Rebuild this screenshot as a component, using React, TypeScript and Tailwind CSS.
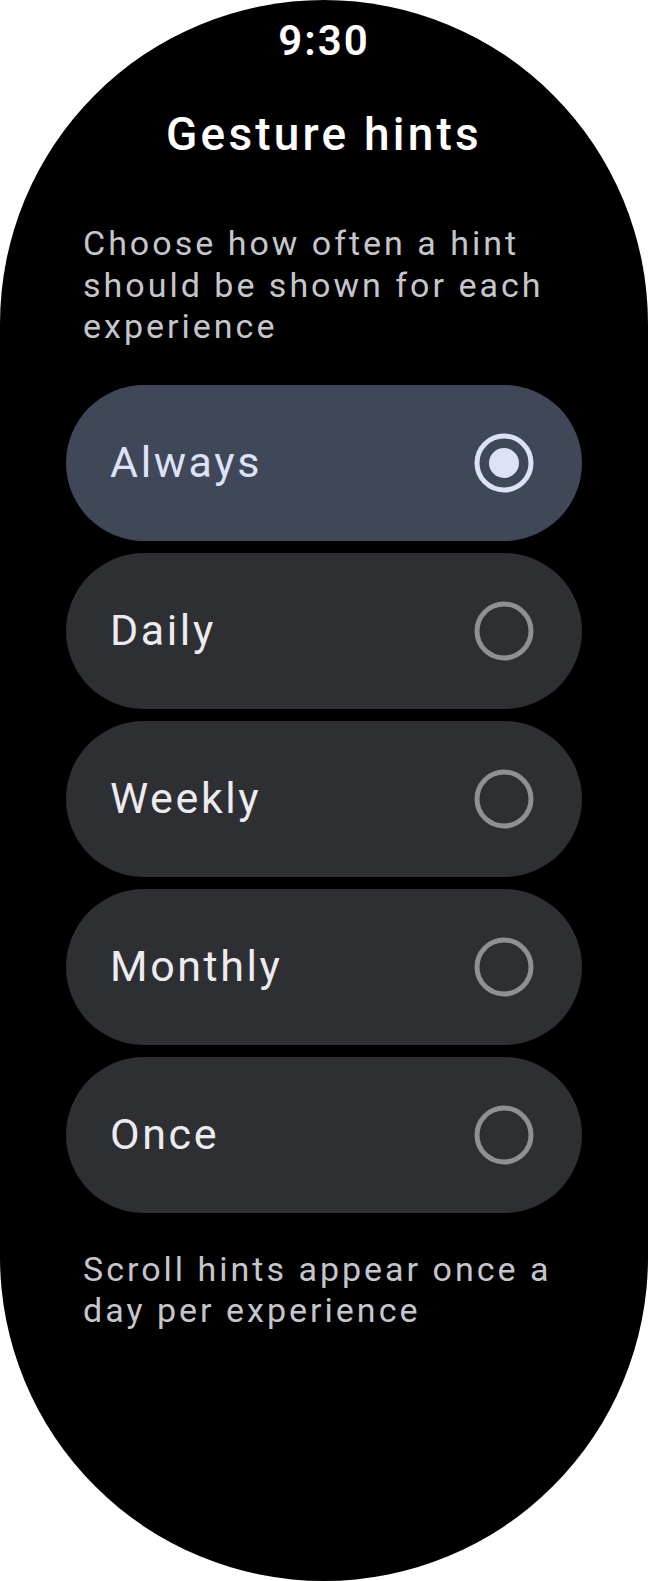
import React, { useState } from "react";

type Option = { label: string };

const OPTIONS: Option[] = [
  { label: "Always" },
  { label: "Daily" },
  { label: "Weekly" },
  { label: "Monthly" },
  { label: "Once" },
];

function Radio({ checked }: { checked: boolean }) {
  return (
    <svg width="60" height="60" viewBox="0 0 60 60" className="shrink-0">
      <circle
        cx="30"
        cy="30"
        r="27"
        fill="none"
        stroke={checked ? "#dde2f8" : "#8e9094"}
        strokeWidth="5"
      />
      {checked && <circle cx="30" cy="30" r="15" fill="#dde2f8" />}
    </svg>
  );
}

export default function App() {
  const [selected, setSelected] = useState(0);

  return (
    <div className="w-[648px] h-[1581px] bg-white">
      <div
        className="w-[648px] h-[1581px] bg-black rounded-[324px] overflow-hidden flex flex-col items-center pt-[17px]"
        style={{ fontFamily: "Roboto, 'Noto Sans', sans-serif" }}
      >
        <div className="text-[42px] leading-[48px] font-semibold text-white tracking-[2px]">
          9:30
        </div>

        <h1 className="mt-[42px] text-[46px] leading-[54px] font-medium text-white tracking-[3.2px]">
          Gesture hints
        </h1>

        <p className="mt-[62px] w-[482px] text-[34px] leading-[41.5px] text-[#c5c6cc] tracking-[3px]">
          Choose how often a hint should be shown for each experience
        </p>

        <div className="mt-[37px] w-[516px] flex flex-col gap-[12px]">
          {OPTIONS.map((opt, i) => {
            const checked = i === selected;
            return (
              <button
                key={opt.label}
                type="button"
                onClick={() => setSelected(i)}
                className={`h-[156px] w-full rounded-full flex items-center justify-between pl-[44px] pr-[48px] ${
                  checked ? "bg-[#404759]" : "bg-[#2e2f33]"
                }`}
              >
                <span
                  className={`text-[43px] tracking-[2.6px] ${
                    checked ? "text-[#dde2f8]" : "text-[#ececf0]"
                  }`}
                >
                  {opt.label}
                </span>
                <Radio checked={checked} />
              </button>
            );
          })}
        </div>

        <p className="mt-[36px] w-[482px] text-[34px] leading-[41.5px] text-[#c5c6cc] tracking-[3px]">
          Scroll hints appear once a day per experience
        </p>
      </div>
    </div>
  );
}
